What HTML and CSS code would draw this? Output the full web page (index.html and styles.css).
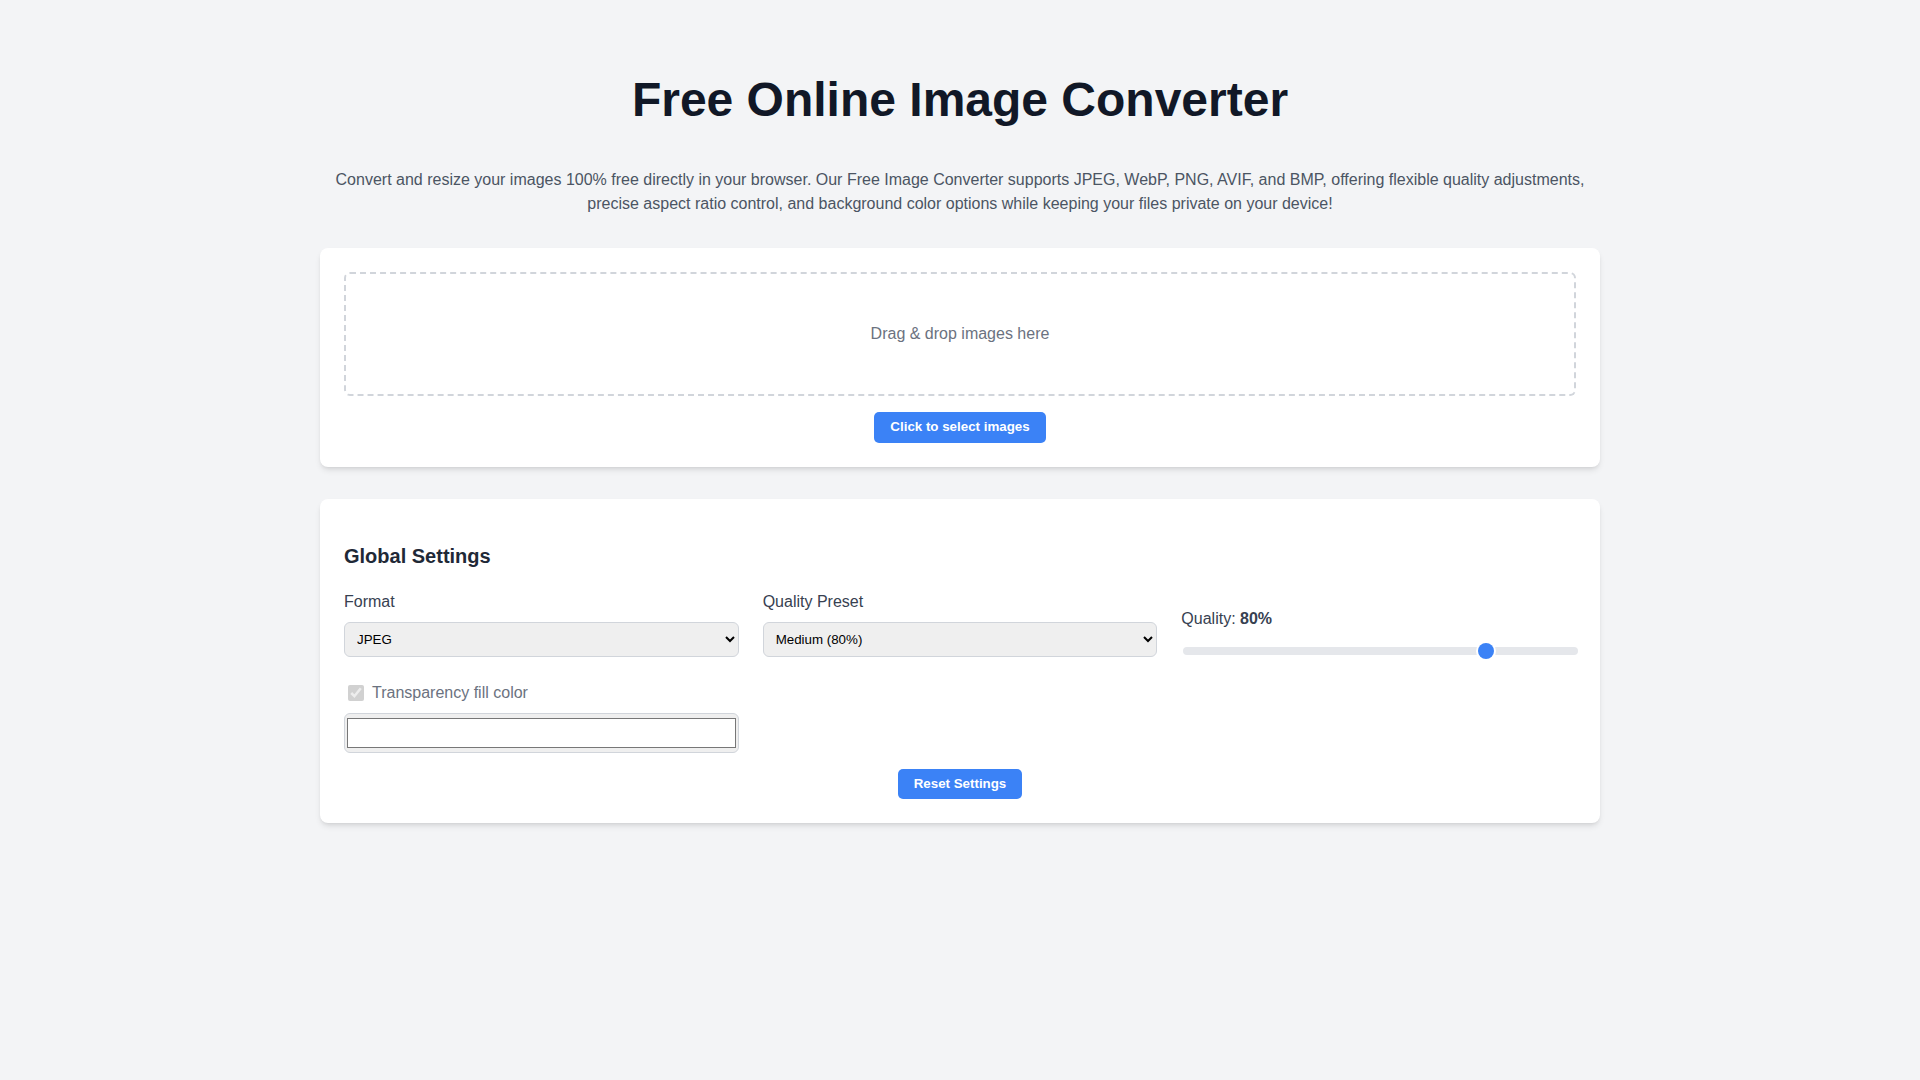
FILE: index.html
```html
<!DOCTYPE html>
<html lang="en">
<head>
<meta charset="utf-8">
<title>Free Online Image Converter</title>
<link rel="stylesheet" href="styles.css">
</head>
<body>
<main class="page">
  <h1 class="title">Free Online Image Converter</h1>
  <p class="intro">Convert and resize your images 100% free directly in your browser. Our Free Image Converter supports JPEG, WebP, PNG, AVIF, and BMP, offering flexible quality adjustments, precise aspect ratio control, and background color options while keeping your files private on your device!</p>

  <section class="card">
    <div class="dropzone">Drag &amp; drop images here</div>
    <div class="actions">
      <button class="btn" type="button">Click to select images</button>
    </div>
  </section>

  <section class="card">
    <h2 class="card-title">Global Settings</h2>
    <div class="grid">
      <div class="field">
        <label class="field-label" for="format">Format</label>
        <select class="select" id="format">
          <option>JPEG</option>
          <option>WebP</option>
          <option>PNG</option>
          <option>AVIF</option>
          <option>BMP</option>
        </select>
      </div>
      <div class="field">
        <label class="field-label" for="preset">Quality Preset</label>
        <select class="select" id="preset">
          <option>Low (60%)</option>
          <option selected>Medium (80%)</option>
          <option>High (90%)</option>
          <option>Maximum (100%)</option>
        </select>
      </div>
      <div class="field field-range">
        <label class="field-label range-label" for="quality">Quality: <strong>80%</strong></label>
        <input class="range" id="quality" type="range" min="10" max="100" value="80">
      </div>
      <div class="field">
        <div class="check-row">
          <input class="checkbox" type="checkbox" id="fill" checked disabled>
          <label class="check-label" for="fill">Transparency fill color</label>
        </div>
        <input class="color" type="color" value="#ffffff">
      </div>
    </div>
    <div class="actions">
      <button class="btn" type="button">Reset Settings</button>
    </div>
  </section>
</main>
</body>
</html>
```
FILE: styles.css
```css
html, body {
  margin: 0;
  background: #f3f4f6;
  font-family: "Liberation Sans", Arial, sans-serif;
  min-height: 100%;
}

.page {
  max-width: 1280px;
  margin: 0 auto;
  padding: 76px 0 40px;
}

.title {
  margin: 0 0 44px;
  font-size: 48px;
  line-height: 48px;
  font-weight: 700;
  color: #111827;
  text-align: center;
}

.intro {
  margin: 0 0 32px;
  font-size: 16px;
  line-height: 24px;
  color: #4b5563;
  text-align: center;
}

.card {
  background: #ffffff;
  border-radius: 8px;
  box-shadow: 0 4px 6px -1px rgba(0, 0, 0, 0.1), 0 2px 4px -2px rgba(0, 0, 0, 0.1);
  padding: 24px;
  margin-bottom: 32px;
}

.dropzone {
  border: 2px dashed #d1d5db;
  border-radius: 6px;
  padding: 48px 16px;
  text-align: center;
  font-size: 16px;
  line-height: 24px;
  color: #6b7280;
}

.actions {
  display: flex;
  justify-content: center;
  margin-top: 16px;
}

.btn {
  background: #3b82f6;
  color: #ffffff;
  border: 0;
  border-radius: 5px;
  padding: 8px 16px;
  font-family: "Liberation Sans", Arial, sans-serif;
  font-size: 13.333px;
  line-height: 14.5px;
  font-weight: 700;
  cursor: pointer;
}

.card-title {
  margin: 19px 0 20px;
  font-size: 20px;
  line-height: 28px;
  font-weight: 700;
  color: #1f2937;
}

.grid {
  display: grid;
  grid-template-columns: repeat(3, 1fr);
  gap: 24px;
}

.field {
  display: flex;
  flex-direction: column;
  min-width: 0;
}

.field-label {
  display: block;
  margin-bottom: 8px;
  font-size: 16px;
  line-height: 24px;
  color: #374151;
}

.field-range {
  justify-content: flex-end;
}

.range-label {
  margin-bottom: 14px;
}

.range-label strong {
  font-weight: 700;
}

.select {
  width: 100%;
  padding: 8px;
  border: 1px solid #d1d5db;
  border-radius: 6px;
  background-color: #efefef;
  color: #000000;
  font-family: "Liberation Sans", Arial, sans-serif;
  font-size: 13.333px;
}

.range {
  -webkit-appearance: none;
  appearance: none;
  width: 100%;
  height: 8px;
  margin: 2px;
  background: #e5e7eb;
  border-radius: 4px;
  outline: none;
}

.range::-webkit-slider-thumb {
  -webkit-appearance: none;
  appearance: none;
  width: 16px;
  height: 16px;
  border-radius: 50%;
  background: #3b82f6;
  box-shadow: 0 0 0 2px #ffffff;
  cursor: pointer;
}

.check-row {
  display: flex;
  align-items: center;
  line-height: 24px;
}

.checkbox {
  width: 16px;
  height: 16px;
  margin: 0 0 0 4px;
}

.check-label {
  margin-left: 8px;
  font-size: 16px;
  color: #6b7280;
}

.color {
  display: block;
  width: 100%;
  height: 40px;
  margin: 8px 0 0;
  padding: 0;
  border: 1px solid #d1d5db;
  border-radius: 6px;
  background-color: #efefef;
  box-sizing: border-box;
}
```
